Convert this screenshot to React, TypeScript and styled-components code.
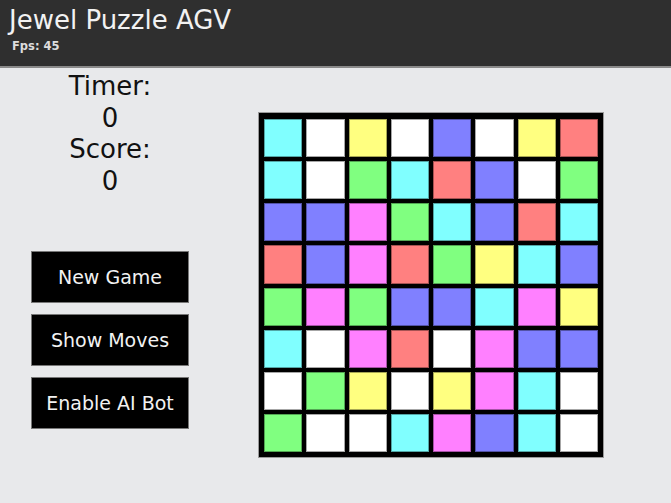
import React from "react";
import styled, { createGlobalStyle } from "styled-components";

const GlobalStyle = createGlobalStyle`
	html, body {
		margin: 0;
		padding: 0;
		background: #e8e9eb;
		font-family: "DejaVu Sans", Verdana, sans-serif;
	}
`;

const Page = styled.div`
	width: 671px;
	height: 503px;
	background: #e8e9eb;
	overflow: hidden;
`;

const Header = styled.header`
	height: 68px;
	background: #2f2f2f;
	border-bottom: 2px solid #8a8a8a;
	color: #f2f2f2;
	padding: 5px 0 0 9px;
	box-sizing: border-box;
`;

const Title = styled.h1`
	margin: 0;
	font-size: 26px;
	font-weight: normal;
	line-height: 30px;
`;

const Fps = styled.div`
	font-size: 11.5px;
	font-weight: bold;
	margin: 4px 0 0 3px;
	color: #dddddd;
`;

const Main = styled.main`
	display: flex;
	align-items: flex-start;
`;

const Side = styled.div`
	width: 220px;
	display: flex;
	flex-direction: column;
	align-items: center;
	padding-top: 3px;
`;

const Stat = styled.div`
	font-size: 26px;
	line-height: 31.5px;
	color: #111;
	text-align: center;
`;

const Buttons = styled.div`
	display: flex;
	flex-direction: column;
	gap: 11px;
	margin-top: 54px;
`;

const Button = styled.button`
	width: 158px;
	height: 52px;
	background: #000;
	color: #f2f2f2;
	border: 1px solid #777;
	font-family: "DejaVu Sans", Verdana, sans-serif;
	font-size: 19px;
	cursor: pointer;
`;

const Board = styled.div`
	margin: 44px 0 0 38px;
	width: 346px;
	height: 346px;
	box-sizing: border-box;
	background: #000;
	border: 1px solid #9a9a9a;
	padding: 6px 5px 5px 5px;
	display: grid;
	grid-template-columns: repeat(8, 1fr);
	grid-template-rows: repeat(8, 1fr);
	gap: 4px;
`;

const colors: Record<string, string> = {
	c: "#80ffff",
	w: "#ffffff",
	y: "#ffff80",
	b: "#8080ff",
	r: "#ff8080",
	g: "#80ff80",
	m: "#ff80ff",
};

const Gem = styled.div<{ $kind: string }>`
	background: ${(p) => colors[p.$kind]};
	border: 1px solid rgba(0, 0, 0, 0.35);
`;

const layout = [
	"cwywbwyr",
	"cwgcrbwg",
	"bbmgcbrc",
	"rbmrgycb",
	"gmgbbcmy",
	"cwmrwmbb",
	"wgywymcw",
	"gwwcmbcw",
];

const App = () => {
	return (
		<Page>
			<GlobalStyle />
			<Header>
				<Title>Jewel Puzzle AGV</Title>
				<Fps>Fps: 45</Fps>
			</Header>
			<Main>
				<Side>
					<Stat>Timer:</Stat>
					<Stat>0</Stat>
					<Stat>Score:</Stat>
					<Stat>0</Stat>
					<Buttons>
						<Button>New Game</Button>
						<Button>Show Moves</Button>
						<Button>Enable AI Bot</Button>
					</Buttons>
				</Side>
				<Board>
					{layout.map((row, r) =>
						row.split("").map((k, c) => <Gem key={`${r}-${c}`} $kind={k} />)
					)}
				</Board>
			</Main>
		</Page>
	);
};

export default App;
